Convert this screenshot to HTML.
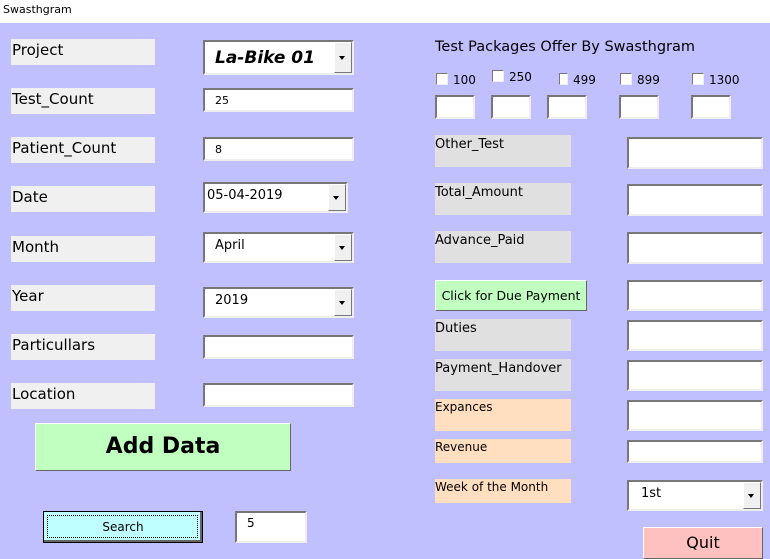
<!DOCTYPE html><html><head><style>
body{margin:0;width:770px;height:557px;background:#c0c0ff;position:relative;overflow:hidden;font-family:"DejaVu Sans","Liberation Sans",sans-serif;color:#000}
.a{position:absolute;box-sizing:border-box}
.t{background:#fff;top:0;left:0;width:770px;height:23px;font-size:11px;padding:3px 0 0 3px}
.l{background:#f0f0f0;font-size:15px;padding:1px 0 0 1px;line-height:20px}
.g{background:#e0e0e0;font-size:13px;line-height:18px}
.p{background:#ffdfc0;font-size:12px;line-height:16px}
.i{background:#fff;border:2px solid;border-color:#777 #eee #eee #777;font-size:12px;padding:2px 0 0 10px}
.dd{position:absolute;right:0;top:0;bottom:0;width:16px;background:#f0f0f0;border:1px solid;border-color:#fff #777 #777 #fff}
.dd:after{content:"";position:absolute;left:4px;top:50%;margin-top:-2px;border:3.5px solid transparent;border-top:4px solid #000}
.cb{width:12px;height:12px;background:#fff;border:1px solid;border-color:#777 #eee #eee #777}
.ck{font-size:12px}
</style></head><body>
<div class="a t">Swasthgram</div>
<div class="a l" style="left:11px;top:39px;width:144px;height:26px">Project</div>
<div class="a l" style="left:11px;top:88px;width:144px;height:26px">Test_Count</div>
<div class="a l" style="left:11px;top:137px;width:144px;height:26px">Patient_Count</div>
<div class="a l" style="left:11px;top:186px;width:144px;height:26px">Date</div>
<div class="a l" style="left:11px;top:236px;width:144px;height:26px">Month</div>
<div class="a l" style="left:11px;top:285px;width:144px;height:26px">Year</div>
<div class="a l" style="left:11px;top:334px;width:144px;height:26px">Particullars</div>
<div class="a l" style="left:11px;top:383px;width:144px;height:26px">Location</div>

<div class="a i" style="left:203px;top:40px;width:151px;height:35px;font:italic bold 17px 'DejaVu Sans',sans-serif;padding:6px 0 0 10px">La-Bike 01<div class="dd"></div></div>
<div class="a i" style="left:203px;top:88px;width:151px;height:24px;font-size:11px;padding-top:4px">25</div>
<div class="a i" style="left:203px;top:137px;width:151px;height:24px;font-size:11px;padding-top:4px">8</div>
<div class="a i" style="left:203px;top:182px;width:145px;height:31px;font-size:13px;padding:4px 0 0 2px">05-04-2019<div class="dd"></div></div>
<div class="a i" style="left:203px;top:232px;width:151px;height:31px;font-size:13px;padding:4px 0 0 10px">April<div class="dd"></div></div>
<div class="a i" style="left:203px;top:287px;width:151px;height:31px;font-size:13px;padding:4px 0 0 10px">2019<div class="dd"></div></div>
<div class="a i" style="left:203px;top:335px;width:151px;height:24px"></div>
<div class="a i" style="left:203px;top:383px;width:151px;height:24px"></div>

<div class="a" style="left:35px;top:423px;width:256px;height:48px;background:#c0ffc0;border:1px solid;border-color:#fff #666 #666 #fff;font:bold 22px 'DejaVu Sans',sans-serif;text-align:center;line-height:46px">Add Data</div>
<div class="a" style="left:43px;top:511px;width:160px;height:32px;background:#c0ffff;border:1px solid #000;box-shadow:inset -2px -2px #666;font-size:12px;text-align:center;line-height:30px"><div class="a" style="left:3px;top:3px;right:4px;bottom:4px;border:1px dotted #000"></div>Search</div>
<div class="a i" style="left:235px;top:511px;width:72px;height:32px;padding-top:3px;font-size:12px">5</div>

<div class="a" style="left:435px;top:39px;font-size:14.5px">Test Packages Offer By Swasthgram</div>
<div class="a cb" style="left:436px;top:73px"></div><div class="a ck" style="left:453px;top:73px">100</div>
<div class="a cb" style="left:492px;top:70px"></div><div class="a ck" style="left:509px;top:70px">250</div>
<div class="a cb" style="left:559px;top:73px;width:9px"></div><div class="a ck" style="left:573px;top:73px">499</div>
<div class="a cb" style="left:620px;top:73px"></div><div class="a ck" style="left:637px;top:73px">899</div>
<div class="a cb" style="left:692px;top:73px"></div><div class="a ck" style="left:709px;top:73px">1300</div>
<div class="a i" style="left:435px;top:95px;width:40px;height:24px"></div>
<div class="a i" style="left:491px;top:95px;width:40px;height:24px"></div>
<div class="a i" style="left:547px;top:95px;width:40px;height:24px"></div>
<div class="a i" style="left:619px;top:95px;width:40px;height:24px"></div>
<div class="a i" style="left:691px;top:95px;width:40px;height:24px"></div>

<div class="a g" style="left:435px;top:135px;width:136px;height:32px;padding-top:1px">Other_Test</div>
<div class="a g" style="left:435px;top:183px;width:136px;height:32px;padding-top:1px">Total_Amount</div>
<div class="a g" style="left:435px;top:231px;width:136px;height:32px;padding-top:1px">Advance_Paid</div>
<div class="a" style="left:435px;top:280px;width:152px;height:31px;background:#c0ffc0;border:1px solid;border-color:#fff #666 #666 #fff;font-size:12.5px;text-align:center;line-height:29px">Click for Due Payment</div>
<div class="a g" style="left:435px;top:319px;width:136px;height:32px;padding-top:1px">Duties</div>
<div class="a g" style="left:435px;top:359px;width:136px;height:32px;padding-top:1px">Payment_Handover</div>
<div class="a p" style="left:435px;top:399px;width:136px;height:32px">Expances</div>
<div class="a p" style="left:435px;top:439px;width:136px;height:24px">Revenue</div>
<div class="a p" style="left:435px;top:479px;width:136px;height:24px">Week of the Month</div>

<div class="a i" style="left:627px;top:137px;width:136px;height:32px"></div>
<div class="a i" style="left:627px;top:184px;width:136px;height:32px"></div>
<div class="a i" style="left:627px;top:232px;width:136px;height:32px"></div>
<div class="a i" style="left:627px;top:280px;width:136px;height:31px"></div>
<div class="a i" style="left:627px;top:320px;width:136px;height:31px"></div>
<div class="a i" style="left:627px;top:360px;width:136px;height:31px"></div>
<div class="a i" style="left:627px;top:400px;width:136px;height:31px"></div>
<div class="a i" style="left:627px;top:440px;width:136px;height:23px"></div>
<div class="a i" style="left:627px;top:480px;width:136px;height:31px;font-size:13px;padding:4px 0 0 12px">1st<div class="dd"></div></div>
<div class="a" style="left:643px;top:527px;width:120px;height:32px;background:#ffc0c0;border:1px solid;border-color:#fff #666 #666 #fff;font-size:16px;text-align:center;line-height:30px">Quit</div>
</body></html>
